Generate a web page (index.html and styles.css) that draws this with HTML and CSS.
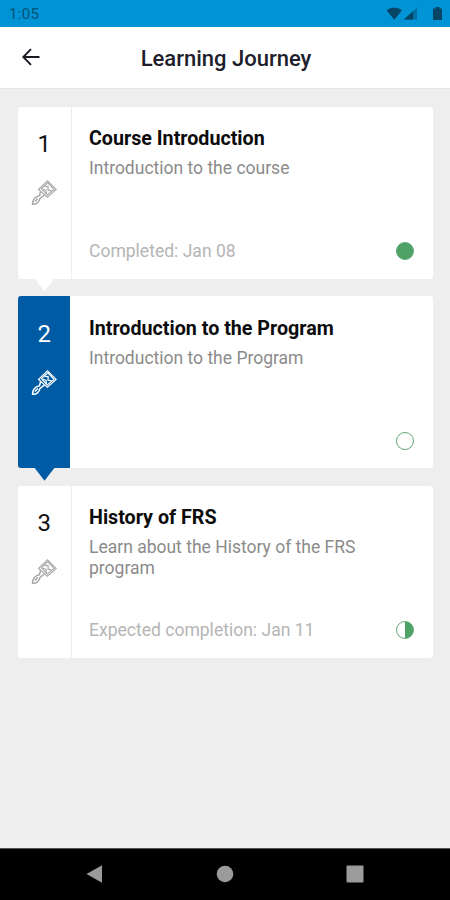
FILE: index.html
```html
<!DOCTYPE html>
<html lang="en">
<head>
<meta charset="utf-8">
<title>Learning Journey</title>
<link rel="stylesheet" href="styles.css">
</head>
<body>
<svg class="defs" width="0" height="0">
  <symbol id="brush" viewBox="0 0 26 26">
    <path d="M7.5 9.500 16.500 .8 25.300 9.500 16.400 17.200Z M10.500 8.700 16.800 2.800 23 9.500 16.300 15Z" stroke-width="1.100"/>
    <path d="M13.500 6.200 17.200 6.800 17 10.200 20.500 10.800M11.500 9 15 10.500 15.500 14" stroke-width="1.200"/>
    <path d="M9.500 11.800 8.500 15.800C4.600 16.200 1.300 20 1.500 24.200 5.500 24.800 8.300 22 8.800 18.600L13.400 15M4 21.500 6.800 18.500" stroke-width="1.500"/>
  </symbol>
</svg>
<div class="screen">
  <div class="status">
    <span class="time">1:05</span>
    <svg class="signals" width="58" height="16" viewBox="0 0 58 16">
      <path d="M.5 4.300Q8.300-1.500 16 4.300L8.300 13.800Z"/>
      <path d="M18 13.500 31 1.500V13.500Z" opacity=".45"/>
      <path d="M18 13.500 27 5.200V13.500Z"/>
      <path d="M47 2.500h2.500V1h4v1.500H56V14H47Z"/>
    </svg>
  </div>
  <header class="appbar">
    <svg class="back" width="18" height="18" viewBox="0 0 18 18"><path d="M17.500 9H1.500M9 1.200 1.300 9 9 16.800"/></svg>
    <h1>Learning Journey</h1>
  </header>
  <main class="journey">
    <article class="card">
      <div class="step"><span class="num">1</span><svg class="brush"><use href="#brush"/></svg></div>
      <div class="body">
        <h2>Course Introduction</h2>
        <p class="desc">Introduction to the course</p>
        <div class="foot"><span>Completed: Jan 08</span><i class="dot full"></i></div>
      </div>
    </article>
    <article class="card active">
      <div class="step"><span class="num">2</span><svg class="brush"><use href="#brush"/></svg></div>
      <div class="body">
        <h2>Introduction to the Program</h2>
        <p class="desc">Introduction to the Program</p>
        <div class="foot"><span></span><i class="dot"></i></div>
      </div>
    </article>
    <article class="card last">
      <div class="step"><span class="num">3</span><svg class="brush"><use href="#brush"/></svg></div>
      <div class="body">
        <h2>History of FRS</h2>
        <p class="desc">Learn about the History of the FRS program</p>
        <div class="foot"><span>Expected completion: Jan 11</span><i class="dot half"></i></div>
      </div>
    </article>
  </main>
  <nav class="navbar">
    <svg width="18" height="20" viewBox="0 0 18 20"><path d="M.5 10 16 1.300V18.700Z"/></svg>
    <svg width="18" height="18" viewBox="0 0 18 18"><circle cx="9" cy="9" r="8.300"/></svg>
    <svg width="18" height="18" viewBox="0 0 18 18"><rect x=".5" y=".5" width="17" height="17" rx="1"/></svg>
  </nav>
</div>
</body>
</html>
```

FILE: styles.css
```css
* { box-sizing: border-box; }
body, h1, h2, p { margin: 0; }
body { font-family: Roboto, sans-serif; }
.defs { position: absolute; }
.screen {
  width: 450px;
  height: 900px;
  display: flex;
  flex-direction: column;
  background: #eee;
  overflow: hidden;
}
.status {
  height: 26.500px;
  flex: none;
  display: flex;
  justify-content: space-between;
  padding: 6px 6px 0 9px;
  background: #0093d5;
  color: #075174;
}
.time { font-size: 15px; line-height: 17px; letter-spacing: .3px; }
.signals { fill: #064565; }
.appbar {
  height: 62.500px;
  flex: none;
  display: flex;
  align-items: center;
  padding-left: 22px;
  background: #fff;
  border-bottom: 1px solid #e4e4e4;
}
.back { fill: none; stroke: #1b1b23; stroke-width: 1.900; }
h1 {
  width: 372px;
  padding-top: 3px;
  text-align: center;
  font-size: 22px;
  font-weight: 500;
  line-height: 28px;
  color: #20202a;
}
.journey {
  flex: 1;
  display: flex;
  flex-direction: column;
  gap: 17.500px;
  padding: 17.700px 17px 0 18px;
}
.card { display: flex; height: 172px; flex: none; }
.step {
  position: relative;
  width: 52.600px;
  display: flex;
  flex-direction: column;
  align-items: center;
  padding-top: 23.400px;
  background: #fff;
  border-radius: 3px 0 0 3px;
  color: #111;
}
.step::after {
  content: "";
  position: absolute;
  top: 171.500px;
  left: 16.500px;
  width: 20px;
  height: 13px;
  background: #fff;
  clip-path: polygon(0 0, 100% 0, 50% 100%);
}
.last .step::after { display: none; }
.num { font-size: 24px; line-height: 29px; }
.brush {
  width: 26px;
  height: 26px;
  margin-top: 21px;
  fill: none;
  stroke: #aaa;
}
.active .step { width: 52.400px; background: #005ba5; color: #fff; }
.active .step::after { background: #005ba5; }
.active .brush { stroke: #fff; }
.body {
  flex: 1;
  display: flex;
  flex-direction: column;
  margin-left: 1px;
  padding: 20.400px 19px 17px 17.400px;
  background: #fff;
  border-radius: 0 3px 3px 0;
}
.active .body { margin-left: 0; padding-left: 18.600px; }
h2 {
  font-size: 19.700px;
  font-weight: 700;
  line-height: 24px;
  color: #0c0c0c;
}
.desc {
  margin-top: 7px;
  width: 290px;
  font-size: 17.500px;
  line-height: 20.500px;
  color: #8b8b8b;
}
.foot {
  margin-top: auto;
  display: flex;
  justify-content: space-between;
  align-items: center;
  height: 21px;
  font-size: 17.550px;
  color: #b5b5b5;
}
.dot { width: 18px; height: 18px; border: 1px solid #62a779; border-radius: 50%; }
.full { background: #4fa265; }
.half { background: linear-gradient(90deg, #fff 50%, #4fa265 50%); }
.navbar {
  height: 52px;
  flex: none;
  display: flex;
  justify-content: space-between;
  align-items: center;
  padding: 0 86px 1px;
  background: #000;
  border-top: 1px solid #555;
  fill: #9b9b9b;
}
```
